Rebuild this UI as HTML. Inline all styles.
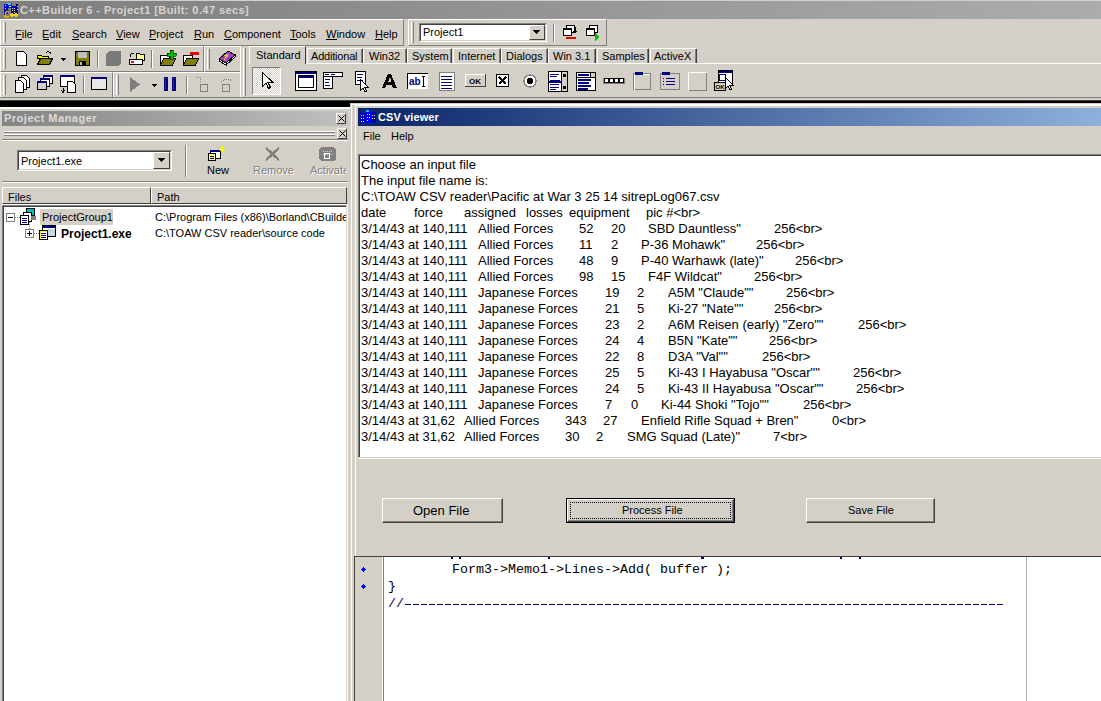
<!DOCTYPE html>
<html><head><meta charset="utf-8">
<style>
*{box-sizing:border-box;margin:0;padding:0}
html,body{width:1101px;height:701px;overflow:hidden}
body{position:relative;background:#d4d0c8;font-family:"Liberation Sans",sans-serif;font-size:11px;color:#000}
.a{position:absolute}
.t{position:absolute;white-space:pre;line-height:1}
.raised{border:1px solid;border-color:#fff #808080 #808080 #fff}
.sunk{border:1px solid;border-color:#808080 #fff #fff #808080}
.hl{position:absolute;height:1px}
.vl{position:absolute;width:1px}
.grip{position:absolute;width:3px;border-left:1px solid #fff;border-right:1px solid #808080}
svg{position:absolute;overflow:visible;shape-rendering:crispEdges}
.m{position:absolute;white-space:pre;line-height:1;font-size:13px}
.c{position:absolute;white-space:pre;line-height:1;font-family:"Liberation Mono",monospace;font-size:13.33px}
</style></head><body>

<!-- ============ MAIN TITLE BAR ============ -->
<div class="a" style="left:0;top:1px;width:1101px;height:18px;background:linear-gradient(to right,#7e7e7e,#acacac)"></div>
<svg style="left:2px;top:2px" width="16" height="16" viewBox="0 0 16 16">
 <rect x="2" y="2" width="4" height="10" fill="#0000e0"/><rect x="6" y="1" width="4" height="5" fill="#0020ff"/><rect x="6" y="1" width="3" height="2" fill="#40d0ff"/><rect x="9" y="4" width="6" height="9" fill="#0000c0"/><rect x="14" y="2" width="2" height="10" fill="#000080"/>
 <path d="M3 3h1M3 6h1M7 4h1M8 4h1M10 6h1M12 6h1M10 8h1M12 8h1M12 10h1M15 4h1M15 7h1" stroke="#ff0"/>
 <path d="M7 9.5Q3 8.5 3 12.5Q3 16 7 15" stroke="#e0b000" stroke-width="2" fill="none"/><path d="M2 12.5Q2 8 7 8.5" stroke="#0000a0" stroke-width=".8" fill="none"/>
 <path d="M8 13h4M10 11v4M12 13h4M14 11v4" stroke="#ffd000" stroke-width="1.2"/>
</svg>
<div class="t" style="left:20px;top:5px;font-weight:bold;color:#d8d4d0;letter-spacing:0.42px">C++Builder 6 - Project1 [Built: 0.47 secs]</div>

<!-- ============ MENU BAND ============ -->
<div class="a raised" style="left:0;top:19px;width:404px;height:27px"></div>
<div class="grip" style="left:3px;top:22px;height:21px"></div>
<div class="t" style="left:15px;top:29px">File</div>
<div class="t" style="left:42px;top:29px">Edit</div>
<div class="t" style="left:72px;top:29px">Search</div>
<div class="t" style="left:116px;top:29px">View</div>
<div class="t" style="left:149px;top:29px">Project</div>
<div class="t" style="left:194px;top:29px">Run</div>
<div class="t" style="left:224px;top:29px">Component</div>
<div class="t" style="left:290px;top:29px">Tools</div>
<div class="t" style="left:326px;top:29px">Window</div>
<div class="t" style="left:375px;top:29px">Help</div>
<!-- underlines -->
<div class="hl" style="left:16px;top:39px;width:6px;background:#000"></div>
<div class="hl" style="left:43px;top:39px;width:6px;background:#000"></div>
<div class="hl" style="left:72px;top:39px;width:7px;background:#000"></div>
<div class="hl" style="left:116px;top:39px;width:7px;background:#000"></div>
<div class="hl" style="left:149px;top:39px;width:7px;background:#000"></div>
<div class="hl" style="left:194px;top:39px;width:7px;background:#000"></div>
<div class="hl" style="left:224px;top:39px;width:8px;background:#000"></div>
<div class="hl" style="left:290px;top:39px;width:7px;background:#000"></div>
<div class="hl" style="left:326px;top:39px;width:11px;background:#000"></div>
<div class="hl" style="left:375px;top:39px;width:8px;background:#000"></div>

<!-- Project combo band -->
<div class="a raised" style="left:408px;top:19px;width:199px;height:27px"></div>
<div class="grip" style="left:411px;top:22px;height:21px"></div>
<div class="a" style="left:419px;top:23px;width:128px;height:19px;border:1px solid;border-color:#808080 #fff #fff #808080;background:#fff"></div>
<div class="a" style="left:420px;top:24px;width:126px;height:17px;border:1px solid;border-color:#404040 #d4d0c8 #d4d0c8 #404040;background:#fff"></div>
<div class="t" style="left:423px;top:27px">Project1</div>
<div class="a" style="left:529px;top:25px;width:16px;height:15px;background:#d4d0c8;border:1px solid;border-color:#fff #404040 #404040 #fff"></div>
<svg style="left:533px;top:30px" width="8" height="5"><path d="M0 0h7l-3.5 4z" fill="#000"/></svg>
<div class="vl" style="left:553px;top:24px;height:18px;background:#808080"></div>
<div class="vl" style="left:554px;top:24px;height:18px;background:#fff"></div>

<!-- ============ TOOLBAR ROW 1 ============ -->
<div class="a raised" style="left:0;top:46px;width:204px;height:26px"></div>
<div class="grip" style="left:3px;top:49px;height:20px"></div>
<div class="a raised" style="left:204px;top:46px;width:37px;height:26px"></div>
<div class="grip" style="left:207px;top:49px;height:20px"></div>
<!-- new doc -->
<svg style="left:15px;top:50px" width="14" height="17"><path d="M1.5 1.5h7l3 3v10.5h-10z" fill="#fff" stroke="#000"/></svg>
<!-- open folder -->
<svg style="left:36px;top:50px" width="18" height="17"><path d="M1.5 5.5h4l1 1h6v2h-11z" fill="#ff0" stroke="#000"/><path d="M1.5 14.5l3-6h12l-3 6z" fill="#808000" stroke="#000"/><path d="M10 3q3-3 5 1" stroke="#000" fill="none"/></svg>
<svg style="left:61px;top:58px" width="6" height="4"><path d="M0 0h5l-2.5 3z" fill="#000"/></svg>
<!-- save -->
<svg style="left:75px;top:51px" width="16" height="16"><rect x="0.5" y="0.5" width="14" height="14" fill="#808000" stroke="#000"/><rect x="3" y="1" width="9" height="6" fill="#c0c0c0"/><rect x="4" y="10" width="7" height="5" fill="#000"/><rect x="5" y="11" width="2" height="3" fill="#c0c0c0"/></svg>
<div class="vl" style="left:97px;top:50px;height:18px;background:#808080"></div><div class="vl" style="left:98px;top:50px;height:18px;background:#fff"></div>
<!-- gray disabled icon -->
<svg style="left:106px;top:51px" width="16" height="16"><path d="M3 0h12v12l-3 3h-12v-12z" fill="#7a7a7a"/></svg>
<!-- open project -->
<svg style="left:128px;top:49px" width="18" height="18"><path d="M8.5 4.5h3l1 1h4v6h-8z" fill="#ffff80" stroke="#000"/><path d="M2 8q0-4 4-4" stroke="#000" fill="none"/><rect x="1.5" y="10.5" width="13" height="5" fill="#fff" stroke="#000"/><rect x="3" y="12" width="3" height="2" fill="#f00"/></svg>
<div class="vl" style="left:151px;top:50px;height:18px;background:#808080"></div><div class="vl" style="left:152px;top:50px;height:18px;background:#fff"></div>
<!-- add to project -->
<svg style="left:159px;top:49px" width="18" height="18"><path d="M1.5 6.5h9v8h-9z" fill="#fff" stroke="#000"/><path d="M1.5 16.5l3-7h12l-3 7z" fill="#808000" stroke="#000"/><path d="M11 1h3v3h3v3h-3v3h-3v-3h-3v-3h3z" fill="#00c000" stroke="#000" stroke-width=".6"/></svg>
<!-- remove from project -->
<svg style="left:182px;top:49px" width="18" height="18"><path d="M1.5 6.5h9v8h-9z" fill="#fff" stroke="#000"/><path d="M1.5 16.5l3-7h12l-3 7z" fill="#808000" stroke="#000"/><rect x="8" y="3" width="9" height="3" fill="#e00000"/></svg>
<!-- help book -->
<svg style="left:218px;top:50px" width="19" height="17"><path d="M1 9l9-8 7 4-9 8z" fill="#a040c0" stroke="#000" stroke-width="1"/><path d="M1 9l7 4v2l-7-4z" fill="#fff" stroke="#000" stroke-width="1"/><path d="M8 13l9-8v2l-9 8z" fill="#fff" stroke="#000" stroke-width="1"/><text x="7" y="10" font-size="8" fill="#ff0" font-weight="bold" font-family="Liberation Sans" transform="skewX(-15)">?</text></svg>

<!-- ============ TOOLBAR ROW 2 ============ -->
<div class="a raised" style="left:0;top:72px;width:113px;height:26px"></div>
<div class="grip" style="left:3px;top:75px;height:20px"></div>
<div class="a raised" style="left:113px;top:72px;width:128px;height:26px"></div>
<div class="grip" style="left:116px;top:75px;height:20px"></div>
<!-- view unit -->
<svg style="left:14px;top:74px" width="18" height="20"><path d="M7.5 1.5h5l3 3v9h-8z" fill="#fff" stroke="#000"/><path d="M4.5 3.5h5l3 3v9h-8z" fill="#fff" stroke="#000"/><path d="M1.5 6.5h5l3 3v9h-8z" fill="#fff" stroke="#000"/></svg>
<!-- view form -->
<svg style="left:37px;top:75px" width="16" height="16"><rect x="6.5" y="0.5" width="9" height="8" fill="#fff" stroke="#000"/><rect x="6" y="0" width="10" height="2" fill="#000080"/><rect x="3.5" y="3.5" width="9" height="8" fill="#fff" stroke="#000"/><rect x="3" y="3" width="10" height="2" fill="#000080"/><rect x="0.5" y="6.5" width="9" height="8" fill="#d4d0c8" stroke="#000"/><rect x="0" y="6" width="10" height="2" fill="#000080"/></svg>
<!-- toggle form/unit -->
<svg style="left:60px;top:74px" width="18" height="20"><rect x="0.5" y="1.5" width="14" height="11" fill="#fff" stroke="#000"/><rect x="0" y="1" width="15" height="2" fill="#000080"/><path d="M7.5 7.5h5l3 3v8h-8z" fill="#fff" stroke="#000"/><path d="M3 14v4M1.5 16.5l1.5 2 1.5-2M14 1v4" stroke="#000" fill="none"/></svg>
<div class="vl" style="left:83px;top:76px;height:18px;background:#808080"></div><div class="vl" style="left:84px;top:76px;height:18px;background:#fff"></div>
<!-- new form -->
<svg style="left:91px;top:77px" width="17" height="14"><rect x="0.5" y="0.5" width="15" height="12" fill="#e8e8e8" stroke="#000"/><rect x="0" y="0" width="16" height="2" fill="#000080"/></svg>
<!-- run -->
<svg style="left:130px;top:77px" width="12" height="16"><path d="M0 0l10 7.5-10 7.5z" fill="#808080"/></svg>
<svg style="left:152px;top:84px" width="6" height="4"><path d="M0 0h5l-2.5 3z" fill="#000"/></svg>
<!-- pause -->
<svg style="left:164px;top:77px" width="13" height="15"><rect x="0" y="0" width="4" height="14" fill="#000080"/><rect x="8" y="0" width="4" height="14" fill="#000080"/><path d="M1 1v12M9 1v12" stroke="#4040ff" stroke-dasharray="1 1"/></svg>
<div class="vl" style="left:186px;top:76px;height:18px;background:#808080"></div><div class="vl" style="left:187px;top:76px;height:18px;background:#fff"></div>
<!-- trace into/step over -->
<svg style="left:194px;top:75px" width="16" height="18"><path d="M2 2h4v6" stroke="#808080" stroke-dasharray="1 1" fill="none"/><rect x="6.5" y="9.5" width="7" height="7" fill="#d4d0c8" stroke="#808080"/></svg>
<svg style="left:218px;top:75px" width="18" height="18"><path d="M3 7q6-6 12 0" stroke="#808080" stroke-dasharray="1 1" fill="none"/><rect x="4.5" y="9.5" width="7" height="7" fill="#d4d0c8" stroke="#808080"/></svg>

<!-- ============ PALETTE ============ -->
<div class="a" style="left:240px;top:46px;width:861px;height:52px;border-left:1px solid #fff;border-bottom:1px solid #808080"></div>
<div class="grip" style="left:243px;top:48px;height:48px"></div>
<div class="hl" style="left:307px;top:48px;width:55px;background:#fff"></div><div class="vl" style="left:307px;top:48px;height:15px;background:#fff"></div>
<div class="hl" style="left:363px;top:48px;width:42px;background:#fff"></div><div class="vl" style="left:363px;top:48px;height:15px;background:#fff"></div>
<div class="hl" style="left:407px;top:48px;width:44px;background:#fff"></div><div class="vl" style="left:407px;top:48px;height:15px;background:#fff"></div>
<div class="hl" style="left:453px;top:48px;width:46px;background:#fff"></div><div class="vl" style="left:453px;top:48px;height:15px;background:#fff"></div>
<div class="hl" style="left:501px;top:48px;width:45px;background:#fff"></div><div class="vl" style="left:501px;top:48px;height:15px;background:#fff"></div>
<div class="hl" style="left:548px;top:48px;width:47px;background:#fff"></div><div class="vl" style="left:548px;top:48px;height:15px;background:#fff"></div>
<div class="hl" style="left:597px;top:48px;width:51px;background:#fff"></div><div class="vl" style="left:597px;top:48px;height:15px;background:#fff"></div>
<div class="hl" style="left:650px;top:48px;width:46px;background:#fff"></div><div class="vl" style="left:650px;top:48px;height:15px;background:#fff"></div>
<!-- tab strip baseline -->
<div class="hl" style="left:305px;top:63px;width:796px;background:#fff"></div>
<!-- Standard tab (selected) -->
<div class="a" style="left:249px;top:46px;width:57px;height:18px;border-top:1px solid #fff;border-left:1px solid #fff;border-right:1px solid #404040"></div>
<div class="t" style="left:256px;top:50px">Standard</div>
<div class="t" style="left:311px;top:51px;letter-spacing:-0.2px">Additional</div>
<div class="vl" style="left:361px;top:49px;height:14px;width:2px;background:linear-gradient(to right,#808080 50%,#404040 50%)"></div>
<div class="t" style="left:369px;top:51px;letter-spacing:0">Win32</div>
<div class="vl" style="left:405px;top:49px;height:14px;width:2px;background:linear-gradient(to right,#808080 50%,#404040 50%)"></div>
<div class="t" style="left:412px;top:51px;letter-spacing:0">System</div>
<div class="vl" style="left:450px;top:49px;height:14px;width:2px;background:linear-gradient(to right,#808080 50%,#404040 50%)"></div>
<div class="t" style="left:458px;top:51px;letter-spacing:0">Internet</div>
<div class="vl" style="left:499px;top:49px;height:14px;width:2px;background:linear-gradient(to right,#808080 50%,#404040 50%)"></div>
<div class="t" style="left:506px;top:51px;letter-spacing:0">Dialogs</div>
<div class="vl" style="left:546px;top:49px;height:14px;width:2px;background:linear-gradient(to right,#808080 50%,#404040 50%)"></div>
<div class="t" style="left:553px;top:51px;letter-spacing:0">Win 3.1</div>
<div class="vl" style="left:594px;top:49px;height:14px;width:2px;background:linear-gradient(to right,#808080 50%,#404040 50%)"></div>
<div class="t" style="left:602px;top:51px;letter-spacing:0">Samples</div>
<div class="vl" style="left:647px;top:49px;height:14px;width:2px;background:linear-gradient(to right,#808080 50%,#404040 50%)"></div>
<div class="t" style="left:654px;top:51px;letter-spacing:0">ActiveX</div>
<div class="vl" style="left:695px;top:49px;height:14px;width:2px;background:linear-gradient(to right,#808080 50%,#404040 50%)"></div>

<!-- palette icons -->
<div class="a" style="left:252px;top:67px;width:29px;height:28px;border:1px solid;border-color:#808080 #fff #fff #808080;background:repeating-conic-gradient(#fff 0 25%,#d4d0c8 0 50%) 0 0/2px 2px"></div>
<svg style="left:262px;top:72px" width="12" height="18"><path d="M0.5 0.5v14l3.5-3.5 2.5 5.5 2-1-2.5-5h5z" fill="#fff" stroke="#000"/></svg>
<!-- frame -->
<svg style="left:295px;top:71px" width="23" height="20"><rect x="0.5" y="0.5" width="21" height="19" fill="#fff" stroke="#000"/><rect x="1" y="1" width="20" height="2" fill="#000080"/><rect x="3.5" y="4.5" width="15" height="12" fill="#fff" stroke="#000"/><rect x="4" y="5" width="14" height="2" fill="#000080"/></svg>
<!-- main menu -->
<svg style="left:323px;top:72px" width="21" height="18"><rect x="0.5" y="0.5" width="19" height="4" fill="#fff" stroke="#000"/><rect x="2" y="2" width="4" height="1" fill="#000080"/><rect x="8" y="2" width="4" height="1" fill="#000080"/><rect x="0.5" y="4.5" width="9" height="12" fill="#fff" stroke="#000"/><path d="M2 7h5M2 10h4M2 13h5" stroke="#000080"/></svg>
<!-- popup menu -->
<svg style="left:355px;top:71px" width="18" height="22"><rect x="0.5" y="0.5" width="10" height="13" fill="#fff" stroke="#000"/><path d="M2 3h6M2 6h5M2 9h6" stroke="#000080"/><path d="M5.5 8.5v11l2.5-2.5 2 4 1.5-.8-2-4h3.5z" fill="#fff" stroke="#000"/></svg>
<!-- label A -->
<svg style="left:382px;top:74px" width="16" height="15"><path d="M0 14L6 0h3l6 14h-4l-1.2-3h-5.6l-1.2 3zM6 8h3.5l-1.75-4.5z" fill="#000"/></svg>
<!-- edit ab -->
<svg style="left:407px;top:73px" width="22" height="16"><rect x="0.5" y="0.5" width="20" height="15" fill="#fff" stroke="#000"/><path d="M20.5 0.5v15h-20" stroke="#fff" fill="none"/><text x="2" y="12" font-size="10" font-weight="bold" fill="#000080" font-family="Liberation Sans">ab</text><path d="M15 3h3M16.5 3v10M15 13h3" stroke="#000"/></svg>
<!-- memo -->
<svg style="left:439px;top:72px" width="16" height="19"><rect x="0.5" y="0.5" width="15" height="18" fill="#fff" stroke="#808080"/><path d="M2 4h11M2 7h11M2 10h11M2 13h11M2 16h11" stroke="#000080"/></svg>
<!-- button OK -->
<svg style="left:465px;top:74px" width="21" height="13"><rect x="0.5" y="0.5" width="20" height="12" fill="#d4d0c8" stroke="#404040"/><path d="M0.5 12V0.5H20" stroke="#fff" fill="none"/><text x="4" y="10" font-size="8" font-weight="bold" fill="#000" font-family="Liberation Sans">OK</text></svg>
<!-- checkbox -->
<svg style="left:496px;top:74px" width="13" height="13"><rect x="0.5" y="0.5" width="12" height="12" fill="#fff" stroke="#000"/><path d="M3 3l7 7M10 3l-7 7" stroke="#000" stroke-width="2"/></svg>
<!-- radio -->
<svg style="left:523px;top:74px" width="14" height="14"><circle cx="7" cy="7" r="6" fill="#fff" stroke="#808080" stroke-width="1.5"/><circle cx="7" cy="7" r="3" fill="#000"/></svg>
<!-- listbox -->
<svg style="left:548px;top:71px" width="20" height="21"><rect x="0.5" y="0.5" width="19" height="20" fill="#fff" stroke="#000"/><path d="M2 3h9M2 5h7M2 9h10M2 13h9M2 16h9M2 18h6" stroke="#000080"/><rect x="1" y="10" width="13" height="2" fill="#000080"/><rect x="13.5" y="0.5" width="6" height="20" fill="#d4d0c8" stroke="#000"/><rect x="15" y="3" width="3" height="3" fill="#000"/><rect x="15" y="15" width="3" height="3" fill="#000"/></svg>
<!-- combobox -->
<svg style="left:576px;top:72px" width="21" height="19"><rect x="0.5" y="0.5" width="19" height="18" fill="#fff" stroke="#000"/><path d="M0.5 5.5h19" stroke="#000"/><path d="M2 3h11M2 8h13M2 11h11M2 14h13M2 17h10" stroke="#000080" stroke-width="1.5"/><rect x="14.5" y="0.5" width="5" height="5" fill="#d4d0c8" stroke="#000"/></svg>
<!-- scrollbar -->
<svg style="left:603px;top:77px" width="22" height="8"><rect x="0" y="1" width="22" height="6" fill="#808080"/><rect x="1.5" y="1.5" width="4" height="4" fill="#fff" stroke="#000"/><rect x="6.5" y="1.5" width="4" height="4" fill="#fff" stroke="#000"/><rect x="11.5" y="1.5" width="4" height="4" fill="#fff" stroke="#000"/><rect x="16.5" y="1.5" width="4" height="4" fill="#fff" stroke="#000"/></svg>
<!-- groupbox -->
<svg style="left:633px;top:71px" width="19" height="20"><rect x="0.5" y="2.5" width="17" height="16" fill="none" stroke="#808080"/><path d="M1.5 18.5V3.5H17" stroke="#fff" fill="none"/><rect x="2" y="1" width="8" height="3" fill="#000080"/></svg>
<!-- radiogroup -->
<svg style="left:660px;top:71px" width="21" height="20"><rect x="0.5" y="2.5" width="19" height="16" fill="none" stroke="#808080"/><rect x="2" y="1" width="8" height="3" fill="#000080"/><path d="M3 7h1M3 10h1M3 13h1" stroke="#000"/><path d="M6 7h9M6 10h9M6 13h9" stroke="#000080"/></svg>
<!-- panel -->
<svg style="left:688px;top:72px" width="20" height="19"><rect x="0.5" y="0.5" width="18" height="18" fill="none" stroke="#808080"/><path d="M0.5 18.5V0.5H18.5" stroke="#fff" fill="none"/></svg>
<!-- action list -->
<svg style="left:714px;top:70px" width="24" height="24"><rect x="4.5" y="0.5" width="14" height="14" fill="#fff" stroke="#000"/><rect x="5" y="1" width="13" height="2" fill="#000080"/><rect x="5.5" y="4.5" width="6" height="6" fill="#fff" stroke="#000080"/><rect x="0.5" y="12.5" width="11" height="8" fill="#d4d0c8" stroke="#000"/><text x="1.5" y="19" font-size="6" font-weight="bold" font-family="Liberation Sans">OK</text><path d="M11.5 7.5v11l2.5-2.5 2 4 1.5-.8-2-4h3.5z" fill="#fff" stroke="#000"/></svg>
<!-- project combo band icons -->
<svg style="left:562px;top:24px" width="17" height="18"><rect x="4.5" y="1.5" width="8" height="7" fill="#fff" stroke="#000"/><rect x="1.5" y="4.5" width="8" height="7" fill="#fff" stroke="#000"/><rect x="1" y="4" width="9" height="2" fill="#000"/><path d="M13 3v6M11 7l2 2 2-2" stroke="#000" fill="none"/><rect x="4" y="13" width="10" height="2" fill="#e00000"/></svg>
<svg style="left:585px;top:24px" width="17" height="18"><rect x="4.5" y="1.5" width="8" height="7" fill="#fff" stroke="#000"/><rect x="1.5" y="4.5" width="8" height="7" fill="#fff" stroke="#000"/><rect x="1" y="4" width="9" height="2" fill="#000"/><path d="M10 9l5 4-5 4z" fill="#00c000"/></svg>

<!-- ============ DOCK BAND / BLACK ============ -->
<div class="hl" style="left:0;top:97px;width:1101px;background:#808080"></div>
<div class="hl" style="left:0;top:100px;width:1101px;background:#404040"></div>
<div class="a" style="left:0;top:101px;width:350px;height:6px;background:#000"></div>
<div class="a" style="left:350px;top:101px;width:751px;height:2px;background:#000"></div>
<div class="a" style="left:0;top:107px;width:350px;height:2px;background:#fff"></div>

<!-- ============ PROJECT MANAGER ============ -->
<div class="a" style="left:2px;top:111px;width:346px;height:15px;background:linear-gradient(to right,#848484,#c0c0c0)"></div>
<div class="t" style="left:4px;top:113px;font-weight:bold;color:#dcdcd8;letter-spacing:0.5px">Project Manager</div>
<div class="a" style="left:336px;top:113px;width:10px;height:11px;background:#d4d0c8;border:1px solid;border-color:#fff #404040 #404040 #fff"></div>
<svg style="left:338px;top:115px;shape-rendering:auto" width="7" height="7"><path d="M0.5 0.5l6 6M6.5 0.5l-6 6" stroke="#000" stroke-width="1"/></svg>
<!-- grip double lines -->
<div class="hl" style="left:4px;top:131px;width:331px;background:#fff"></div>
<div class="hl" style="left:4px;top:132px;width:331px;background:#808080"></div>
<div class="hl" style="left:4px;top:134px;width:331px;background:#fff"></div>
<div class="hl" style="left:4px;top:135px;width:331px;background:#808080"></div>
<div class="a" style="left:337px;top:128px;width:10px;height:11px;background:#d4d0c8;border:1px solid;border-color:#fff #404040 #404040 #fff"></div>
<svg style="left:339px;top:130px;shape-rendering:auto" width="7" height="7"><path d="M0.5 0.5l6 6M6.5 0.5l-6 6" stroke="#000" stroke-width="1"/></svg>
<div class="hl" style="left:2px;top:139px;width:346px;background:#808080"></div>
<div class="hl" style="left:2px;top:140px;width:346px;background:#fff"></div>
<!-- combo -->
<div class="a" style="left:17px;top:150px;width:155px;height:21px;border:1px solid;border-color:#808080 #fff #fff #808080;background:#fff"></div>
<div class="a" style="left:18px;top:151px;width:153px;height:19px;border:1px solid;border-color:#404040 #d4d0c8 #d4d0c8 #404040;background:#fff"></div>
<div class="t" style="left:21px;top:156px">Project1.exe</div>
<div class="a" style="left:153px;top:152px;width:17px;height:17px;background:#d4d0c8;border:1px solid;border-color:#fff #404040 #404040 #fff"></div>
<svg style="left:158px;top:158px" width="8" height="5"><path d="M0 0h7l-3.5 4z" fill="#000"/></svg>
<div class="vl" style="left:185px;top:145px;height:32px;background:#808080"></div>
<div class="vl" style="left:186px;top:145px;height:32px;background:#fff"></div>
<!-- New -->
<svg style="left:208px;top:146px" width="18" height="15"><rect x="2.5" y="4.5" width="10" height="8" fill="#fff" stroke="#000"/><rect x="2" y="4" width="11" height="2" fill="#000080"/><rect x="0.5" y="7.5" width="7" height="7" fill="#ffff80" stroke="#000"/><path d="M2 10h4M2 12h4" stroke="#000080"/><path d="M14 0v6M11 3h6M12 1l4 4M16 1l-4 4" stroke="#ff0" stroke-width="1"/></svg>
<div class="t" style="left:207px;top:165px">New</div>
<!-- Remove (disabled) -->
<svg style="left:265px;top:147px" width="16" height="14"><path d="M1 1l13 12M14 1l-13 12" stroke="#808080" stroke-width="2.5"/></svg>
<div class="t" style="left:254px;top:166px;color:#fff">Remove</div>
<div class="t" style="left:253px;top:165px;color:#808080">Remove</div>
<!-- Activate (disabled) -->
<svg style="left:318px;top:146px" width="19" height="16"><path d="M3 1h12l3 3v9l-2 2h-13l-2-2v-10z" fill="#808080"/><path d="M5 5h9M5 8h9" stroke="#d4d0c8" stroke-dasharray="1 1"/><rect x="6" y="7" width="5" height="5" fill="none" stroke="#fff"/></svg>
<div style="position:absolute;left:309px;top:140px;width:37px;height:40px;overflow:hidden">
<div class="t" style="left:2px;top:26px;color:#fff">Activate</div>
<div class="t" style="left:1px;top:25px;color:#808080">Activate</div>
</div>
<div class="hl" style="left:2px;top:181px;width:346px;background:#808080"></div>
<div class="hl" style="left:2px;top:182px;width:346px;background:#fff"></div>
<!-- header -->
<div class="a" style="left:2px;top:187px;width:149px;height:17px;background:#d4d0c8;border:1px solid;border-color:#fff #404040 #404040 #fff"></div>
<div class="a" style="left:151px;top:187px;width:196px;height:17px;background:#d4d0c8;border:1px solid;border-color:#fff #404040 #404040 #fff"></div>
<div class="hl" style="left:2px;top:204px;width:345px;background:#fff"></div>
<div class="t" style="left:8px;top:192px">Files</div>
<div class="t" style="left:157px;top:192px">Path</div>
<!-- tree -->
<div class="a" style="left:2px;top:205px;width:344px;height:496px;background:#fff;border-top:1px solid #808080;border-left:1px solid #808080"></div>
<div class="hl" style="left:3px;top:206px;width:343px;background:#404040"></div>
<div class="vl" style="left:3px;top:206px;height:495px;background:#404040"></div>
<!-- expand boxes -->
<div class="a" style="left:6px;top:213px;width:9px;height:9px;border:1px solid #808080;background:#fff"></div>
<div class="hl" style="left:8px;top:217px;width:5px;background:#000"></div>
<svg style="left:15px;top:217px" width="6" height="1"><path d="M0 .5h6" stroke="#808080" stroke-dasharray="1 1"/></svg>
<div class="a" style="left:25px;top:229px;width:9px;height:9px;border:1px solid #808080;background:#fff"></div>
<div class="hl" style="left:27px;top:233px;width:5px;background:#000"></div>
<div class="vl" style="left:29px;top:231px;height:5px;background:#000"></div>
<svg style="left:34px;top:233px" width="5" height="1"><path d="M0 .5h5" stroke="#808080" stroke-dasharray="1 1"/></svg>
<svg style="left:29px;top:222px" width="1" height="7"><path d="M.5 0v7" stroke="#808080" stroke-dasharray="1 1"/></svg>
<!-- PG icon -->
<svg style="left:20px;top:208px" width="17" height="17"><rect x="6.5" y="0.5" width="8" height="7" fill="#00c0c0" stroke="#000"/><rect x="3.5" y="4.5" width="8" height="9" fill="#fff" stroke="#000"/><rect x="0.5" y="7.5" width="8" height="9" fill="#fff" stroke="#000"/><path d="M2 10h5M2 12h5M2 14h5" stroke="#000080"/><rect x="11" y="8" width="5" height="4" fill="#808080"/></svg>
<div class="a" style="left:40px;top:209px;width:73px;height:16px;background:#d4d0c8"></div>
<div class="t" style="left:42px;top:212px">ProjectGroup1</div>
<div class="a" style="left:150px;top:206px;width:196px;height:20px;overflow:hidden"><div class="t" style="left:5px;top:6px">C:\Program Files (x86)\Borland\CBuilder6</div></div>
<!-- P1 icon -->
<svg style="left:39px;top:225px" width="17" height="16"><rect x="3.5" y="0.5" width="13" height="11" fill="#fff" stroke="#000"/><rect x="4" y="1" width="12" height="2" fill="#000080"/><rect x="9" y="4" width="7" height="7" fill="#c8d8e0"/><rect x="0.5" y="5.5" width="8" height="9" fill="#fff" stroke="#000"/><path d="M1 6v8M1 6h7" stroke="#ff0"/><path d="M2 8h5M2 10h5M2 12h5" stroke="#000080"/></svg>
<div class="t" style="left:61px;top:228px;font-weight:bold;font-size:12px">Project1.exe</div>
<div class="t" style="left:155px;top:228px">C:\TOAW CSV reader\source code</div>
<!-- right side vertical border lines -->
<div class="vl" style="left:347px;top:205px;height:496px;background:#fff"></div>
<div class="vl" style="left:351px;top:103px;height:598px;background:#fff"></div>

<!-- ============ EDITOR (behind form) ============ -->
<div class="a" style="left:354px;top:556px;width:747px;height:145px;background:#fff;border-top:1px solid #404040;border-left:1px solid #404040"></div>
<div class="a" style="left:355px;top:557px;width:29px;height:144px;background:#d4d0c8;border-right:1px solid #808080;box-shadow:inset -1px 0 0 #fff"></div>
<div class="vl" style="left:1026px;top:557px;height:144px;background:#b0b0b0"></div>
<svg style="left:361px;top:567px" width="5" height="5"><path d="M2.5 0l2.5 2.5-2.5 2.5-2.5-2.5z" fill="#0000ff"/></svg>
<svg style="left:361px;top:584px" width="5" height="5"><path d="M2.5 0l2.5 2.5-2.5 2.5-2.5-2.5z" fill="#0000ff"/></svg>
<div class="a" style="left:451px;top:557px;width:2px;height:2px;background:#000080"></div><div class="a" style="left:459px;top:557px;width:2px;height:2px;background:#000080"></div><div class="a" style="left:548px;top:557px;width:2px;height:2px;background:#000080"></div><div class="a" style="left:701px;top:557px;width:3px;height:2px;background:#000080"></div><div class="a" style="left:840px;top:557px;width:2px;height:2px;background:#000080"></div><div class="a" style="left:859px;top:557px;width:2px;height:2px;background:#000080"></div>
<div class="c" style="left:388px;top:563px">        Form3-&gt;Memo1-&gt;Lines-&gt;Add( buffer );</div>
<div class="c" style="left:388px;top:580px">}</div>
<div class="c" style="left:388px;top:597px;color:#000080">//</div>
<div class="a" style="left:405px;top:604px;width:600px;height:1px;background:repeating-linear-gradient(to right,#000080 0 6px,transparent 6px 8px)"></div>

<!-- ============ CSV VIEWER FORM ============ -->
<div class="a" style="left:350px;top:103px;width:751px;height:453px;background:#d4d0c8"></div>
<div class="vl" style="left:351px;top:104px;height:452px;background:#fff"></div>
<div class="hl" style="left:351px;top:104px;width:750px;background:#fff"></div>
<div class="vl" style="left:355px;top:105px;height:451px;background:#fff"></div>
<div class="hl" style="left:355px;top:105px;width:746px;background:#fff"></div>

<!-- title -->
<div class="a" style="left:358px;top:108px;width:743px;height:18px;background:linear-gradient(to right,#0a246a,#a6caf0) 0 0/882px 100% no-repeat"></div>
<svg style="left:360px;top:110px" width="16" height="14"><rect x="5" y="0" width="6" height="13" fill="#0000ff"/><rect x="6" y="0" width="3" height="2" fill="#00c0ff"/><rect x="0" y="3" width="5" height="10" fill="#0000c0"/><rect x="11" y="2" width="5" height="11" fill="#0000c0"/><path d="M1 5h1M3 5h1M1 8h1M3 8h1M1 11h1M3 11h1M7 4h1M9 4h1M7 7h1M9 7h1M7 10h1M12 5h1M14 5h1M12 8h1M14 8h1" stroke="#ff0"/></svg>
<div class="t" style="left:378px;top:112px;font-weight:bold;color:#fff;letter-spacing:0.1px">CSV viewer</div>
<div class="t" style="left:363px;top:131px">File</div>
<div class="t" style="left:391px;top:131px">Help</div>
<!-- memo -->
<div class="a" style="left:358px;top:154px;width:743px;height:304px;background:#fff;border-top:1px solid #808080;border-left:1px solid #808080;border-bottom:1px solid #fff"></div>
<div class="hl" style="left:359px;top:155px;width:742px;background:#404040"></div>
<div class="vl" style="left:359px;top:155px;height:302px;background:#404040"></div>
<div class="hl" style="left:359px;top:457px;width:742px;background:#d4d0c8"></div>
<div class="hl" style="left:358px;top:458px;width:743px;background:#fff"></div>
<div class="m" style="left:361px;top:158px">Choose an input file</div>
<div class="m" style="left:361px;top:174px">The input file name is:</div>
<div class="m" style="left:361px;top:190px">C:\TOAW CSV reader\Pacific at War 3 25 14 sitrepLog067.csv</div>
<div class="m" style="left:361px;top:206px">date</div>
<div class="m" style="left:414px;top:206px">force</div>
<div class="m" style="left:464px;top:206px">assigned</div>
<div class="m" style="left:526px;top:206px">losses</div>
<div class="m" style="left:569px;top:206px">equipment</div>
<div class="m" style="left:646px;top:206px">pic #&lt;br&gt;</div>
<div class="m" style="left:361px;top:222px">3/14/43 at 140,111</div>
<div class="m" style="left:478px;top:222px">Allied Forces</div>
<div class="m" style="left:579px;top:222px">52</div>
<div class="m" style="left:611px;top:222px">20</div>
<div class="m" style="left:648px;top:222px">SBD Dauntless"</div>
<div class="m" style="left:774px;top:222px">256&lt;br&gt;</div>
<div class="m" style="left:361px;top:238px">3/14/43 at 140,111</div>
<div class="m" style="left:478px;top:238px">Allied Forces</div>
<div class="m" style="left:579px;top:238px">11</div>
<div class="m" style="left:611px;top:238px">2</div>
<div class="m" style="left:641px;top:238px">P-36 Mohawk"</div>
<div class="m" style="left:756px;top:238px">256&lt;br&gt;</div>
<div class="m" style="left:361px;top:254px">3/14/43 at 140,111</div>
<div class="m" style="left:478px;top:254px">Allied Forces</div>
<div class="m" style="left:579px;top:254px">48</div>
<div class="m" style="left:611px;top:254px">9</div>
<div class="m" style="left:641px;top:254px">P-40 Warhawk (late)"</div>
<div class="m" style="left:795px;top:254px">256&lt;br&gt;</div>
<div class="m" style="left:361px;top:270px">3/14/43 at 140,111</div>
<div class="m" style="left:478px;top:270px">Allied Forces</div>
<div class="m" style="left:579px;top:270px">98</div>
<div class="m" style="left:611px;top:270px">15</div>
<div class="m" style="left:648px;top:270px">F4F Wildcat"</div>
<div class="m" style="left:754px;top:270px">256&lt;br&gt;</div>
<div class="m" style="left:361px;top:286px">3/14/43 at 140,111</div>
<div class="m" style="left:478px;top:286px">Japanese Forces</div>
<div class="m" style="left:605px;top:286px">19</div>
<div class="m" style="left:637px;top:286px">2</div>
<div class="m" style="left:668px;top:286px">A5M "Claude""</div>
<div class="m" style="left:786px;top:286px">256&lt;br&gt;</div>
<div class="m" style="left:361px;top:302px">3/14/43 at 140,111</div>
<div class="m" style="left:478px;top:302px">Japanese Forces</div>
<div class="m" style="left:605px;top:302px">21</div>
<div class="m" style="left:637px;top:302px">5</div>
<div class="m" style="left:668px;top:302px">Ki-27 "Nate""</div>
<div class="m" style="left:774px;top:302px">256&lt;br&gt;</div>
<div class="m" style="left:361px;top:318px">3/14/43 at 140,111</div>
<div class="m" style="left:478px;top:318px">Japanese Forces</div>
<div class="m" style="left:605px;top:318px">23</div>
<div class="m" style="left:637px;top:318px">2</div>
<div class="m" style="left:668px;top:318px">A6M Reisen (early) "Zero""</div>
<div class="m" style="left:858px;top:318px">256&lt;br&gt;</div>
<div class="m" style="left:361px;top:334px">3/14/43 at 140,111</div>
<div class="m" style="left:478px;top:334px">Japanese Forces</div>
<div class="m" style="left:605px;top:334px">24</div>
<div class="m" style="left:637px;top:334px">4</div>
<div class="m" style="left:668px;top:334px">B5N "Kate""</div>
<div class="m" style="left:769px;top:334px">256&lt;br&gt;</div>
<div class="m" style="left:361px;top:350px">3/14/43 at 140,111</div>
<div class="m" style="left:478px;top:350px">Japanese Forces</div>
<div class="m" style="left:605px;top:350px">22</div>
<div class="m" style="left:637px;top:350px">8</div>
<div class="m" style="left:668px;top:350px">D3A "Val""</div>
<div class="m" style="left:762px;top:350px">256&lt;br&gt;</div>
<div class="m" style="left:361px;top:366px">3/14/43 at 140,111</div>
<div class="m" style="left:478px;top:366px">Japanese Forces</div>
<div class="m" style="left:605px;top:366px">25</div>
<div class="m" style="left:637px;top:366px">5</div>
<div class="m" style="left:668px;top:366px">Ki-43 I Hayabusa "Oscar""</div>
<div class="m" style="left:853px;top:366px">256&lt;br&gt;</div>
<div class="m" style="left:361px;top:382px">3/14/43 at 140,111</div>
<div class="m" style="left:478px;top:382px">Japanese Forces</div>
<div class="m" style="left:605px;top:382px">24</div>
<div class="m" style="left:637px;top:382px">5</div>
<div class="m" style="left:668px;top:382px">Ki-43 II Hayabusa "Oscar""</div>
<div class="m" style="left:856px;top:382px">256&lt;br&gt;</div>
<div class="m" style="left:361px;top:398px">3/14/43 at 140,111</div>
<div class="m" style="left:478px;top:398px">Japanese Forces</div>
<div class="m" style="left:605px;top:398px">7</div>
<div class="m" style="left:631px;top:398px">0</div>
<div class="m" style="left:661px;top:398px">Ki-44 Shoki "Tojo""</div>
<div class="m" style="left:803px;top:398px">256&lt;br&gt;</div>
<div class="m" style="left:361px;top:414px">3/14/43 at 31,62</div>
<div class="m" style="left:464px;top:414px">Allied Forces</div>
<div class="m" style="left:565px;top:414px">343</div>
<div class="m" style="left:603px;top:414px">27</div>
<div class="m" style="left:641px;top:414px">Enfield Rifle Squad + Bren"</div>
<div class="m" style="left:832px;top:414px">0&lt;br&gt;</div>
<div class="m" style="left:361px;top:430px">3/14/43 at 31,62</div>
<div class="m" style="left:464px;top:430px">Allied Forces</div>
<div class="m" style="left:565px;top:430px">30</div>
<div class="m" style="left:596px;top:430px">2</div>
<div class="m" style="left:627px;top:430px">SMG Squad (Late)"</div>
<div class="m" style="left:773px;top:430px">7&lt;br&gt;</div>

<!-- buttons -->
<div class="a" style="left:382px;top:498px;width:121px;height:25px;border:1px solid;border-color:#fff #404040 #404040 #fff;box-shadow:inset -1px -1px 0 #808080"></div>
<div class="t" style="left:413px;top:504px;font-size:13px">Open File</div>
<div class="a" style="left:566px;top:498px;width:169px;height:25px;border:1px solid #000"></div>
<div class="a" style="left:567px;top:499px;width:167px;height:23px;border:1px solid;border-color:#fff #404040 #404040 #fff;box-shadow:inset -1px -1px 0 #808080"></div>
<div class="a" style="left:570px;top:502px;width:161px;height:17px;border:1px dotted #000"></div>
<div class="t" style="left:622px;top:505px">Process File</div>
<div class="a" style="left:806px;top:498px;width:129px;height:25px;border:1px solid;border-color:#fff #404040 #404040 #fff;box-shadow:inset -1px -1px 0 #808080"></div>
<div class="t" style="left:848px;top:505px">Save File</div>
</body></html>
